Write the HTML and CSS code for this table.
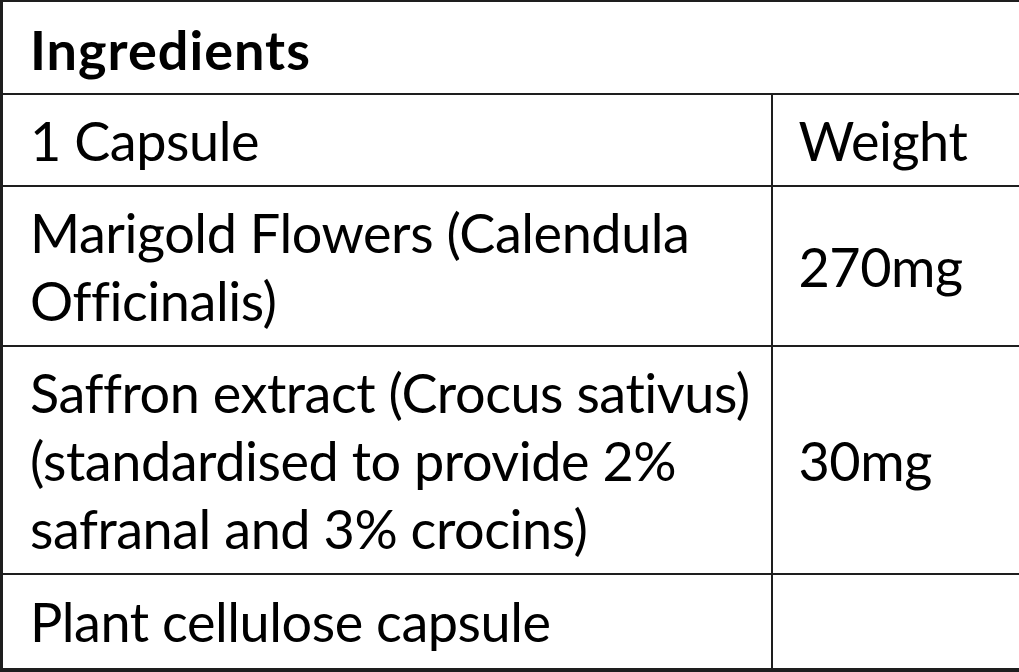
FILE: index.html
```html
<!DOCTYPE html>
<html lang="en">
<head>
<meta charset="utf-8">
<title>Ingredients</title>
<link rel="stylesheet" href="styles.css">
</head>
<body>
<table class="ingredients">
  <colgroup>
    <col class="col-name">
    <col class="col-weight">
  </colgroup>
  <tr>
    <th class="title" colspan="2">Ingredients</th>
  </tr>
  <tr>
    <td>1 Capsule</td>
    <td class="weight">Weight</td>
  </tr>
  <tr>
    <td>Marigold Flowers (Calendula<br>Officinalis)</td>
    <td class="weight">270mg</td>
  </tr>
  <tr>
    <td>Saffron extract (Crocus sativus)<br>(standardised to provide 2%<br>safranal and 3% crocins)</td>
    <td class="weight">30mg</td>
  </tr>
  <tr class="last">
    <td>Plant cellulose capsule</td>
    <td class="weight"></td>
  </tr>
</table>
</body>
</html>
```
FILE: styles.css
```css
html, body {
  margin: 0;
  padding: 0;
  background: #fff;
}

.ingredients {
  width: 1019px;
  table-layout: fixed;
  border-collapse: collapse;
  border-style: solid;
  border-color: #1e1e1e;
  border-width: 2px 4px 4px 3px;
  font-family: Lato, "Open Sans", sans-serif;
  font-size: 54px;
  line-height: 68px;
  letter-spacing: -0.45px;
  font-variant-ligatures: none;
  color: #000;
}

.col-name {
  width: 770px;
}

.col-weight {
  width: 249px;
}

.ingredients th,
.ingredients td {
  border: 2px solid #1e1e1e;
  padding: 12px 10px 10px 27px;
  text-align: left;
  vertical-align: middle;
  white-space: nowrap;
  font-weight: 400;
}

.ingredients .title {
  font-weight: 700;
  letter-spacing: 1px;
  padding-top: 14px;
  padding-bottom: 9px;
}

.ingredients .weight {
  padding-left: 26px;
}

.ingredients .last td {
  padding-top: 13px;
  padding-bottom: 12px;
}
```
